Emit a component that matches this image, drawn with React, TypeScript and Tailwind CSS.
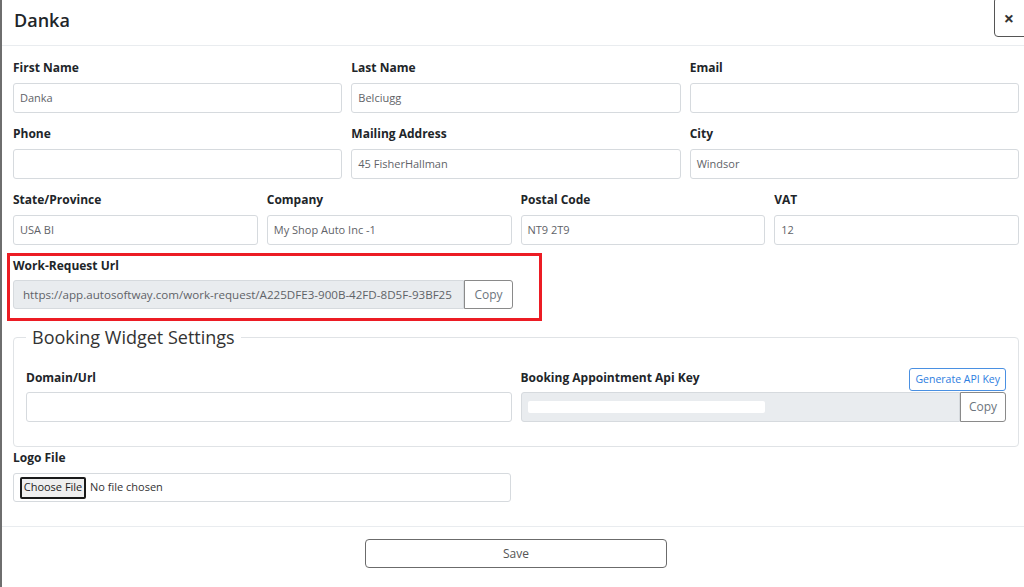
import React from "react";

const font = { fontFamily: '"Open Sans", "Noto Sans", Arial, sans-serif' };

function Field({ label, value, className = "" }: { label: string; value?: string; className?: string }) {
  return (
    <div className={"flex flex-col " + className}>
      <div className="h-[18px] leading-[18px] text-[12px] font-bold text-[#212529] mb-[6px]">{label}</div>
      <div className="h-[30px] border border-[#d6dade] rounded-[3px] bg-white flex items-center pl-[6px] text-[11px] text-[#5f6368] whitespace-nowrap overflow-hidden">
        {value}
      </div>
    </div>
  );
}

export default function App() {
  return (
    <div style={font} className="relative w-[1024px] h-[587px] bg-white border-l-2 border-[#6e6e6e] overflow-hidden">
      {/* Header */}
      <div className="h-[46px] border-b border-[#e9ecef] flex items-center pl-[12px]">
        <div className="text-[18px] font-semibold text-[#212529] leading-none -mt-[6px]">Danka</div>
      </div>
      <div className="absolute right-[-10px] top-[-3px] w-[40px] h-[40px] border-[1.5px] border-[#555] rounded-[4px] bg-white flex items-center justify-center pr-[10px] pt-[2px]">
        <span className="text-[18px] font-bold text-[#333] leading-none">×</span>
      </div>

      {/* Body */}
      <div className="pl-[11px] pr-[5px] pt-[13px]">
        <div className="grid grid-cols-3 gap-x-[9px] gap-y-[12px]">
          <Field label="First Name" value="Danka" />
          <Field label="Last Name" value="Belciugg" />
          <Field label="Email" />
          <Field label="Phone" />
          <Field label="Mailing Address" value="45 FisherHallman" />
          <Field label="City" value="Windsor" />
        </div>
        <div className="grid grid-cols-4 gap-x-[9px] mt-[12px]">
          <Field label="State/Province" value="USA BI" />
          <Field label="Company" value="My Shop  Auto Inc -1" />
          <Field label="Postal Code" value="NT9 2T9" />
          <Field label="VAT" value="12" />
        </div>

        {/* Work request */}
        <div className="mt-[8px] -ml-[6px] w-[535px] border-[3px] border-[#ec1c24] pl-[3px] pr-[26px] pb-[9px] pt-[0px]">
          <div className="h-[21px] leading-[18px] pt-[1px] text-[12px] font-bold text-[#212529] mb-[3px]">Work-Request Url</div>
          <div className="flex h-[29px]">
            <div className="flex-1 min-w-0 bg-[#e9ecef] border border-[#d6dade] rounded-l-[3px] flex items-center pl-[9px] text-[11.6px] text-[#5f6368] whitespace-nowrap overflow-hidden">
              https://app.autosoftway.com/work-request/A225DFE3-900B-42FD-8D5F-93BF25
            </div>
            <div className="w-[49px] shrink-0 border border-[#8a8a8a] rounded-r-[3px] bg-white flex items-center justify-center text-[12px] text-[#6c757d]">
              Copy
            </div>
          </div>
        </div>

        {/* Booking widget */}
        <fieldset className="mt-[5px] border border-[#e0e3e6] rounded-[4px] px-[12px] pb-[24px]">
          <legend className="px-[6px] text-[18px] leading-[22px] text-[#333]">Booking Widget Settings</legend>
          <div className="grid grid-cols-2 gap-x-[9px] pt-[21px]">
            <div className="flex flex-col">
              <div className="h-[23px] leading-[18px] text-[12px] font-bold text-[#212529]">Domain/Url</div>
              <div className="h-[30px] border border-[#d6dade] rounded-[3px] bg-white" />
            </div>
            <div className="flex flex-col">
              <div className="h-[23px] flex justify-between items-start">
                <div className="leading-[18px] text-[12px] font-bold text-[#212529]">Booking Appointment Api Key</div>
                <div className="h-[23px] -mt-[1px] px-[5px] border border-[#4a90e2] rounded-[3px] flex items-center text-[10.5px] text-[#2d7de0]">
                  Generate API Key
                </div>
              </div>
              <div className="flex h-[30px]">
                <div className="flex-1 bg-[#e9ecef] border border-[#d6dade] rounded-l-[3px] flex items-center pl-[6px]">
                  <div className="w-[237px] h-[12px] bg-white rounded-[2px]" />
                </div>
                <div className="w-[46px] border border-[#8a8a8a] rounded-r-[3px] bg-white flex items-center justify-center text-[12px] text-[#6c757d]">
                  Copy
                </div>
              </div>
            </div>
          </div>
        </fieldset>

        {/* Logo file */}
        <div className="mt-[2px] w-[498px] flex flex-col">
          <div className="h-[18px] leading-[18px] text-[12px] font-bold text-[#212529] mb-[6px]">Logo File</div>
          <div className="h-[29px] border border-[#d6dade] rounded-[3px] bg-white flex items-center pl-[6px] gap-[4px]">
            <div className="h-[22px] w-[66px] border-2 border-[#1a1a1a] bg-[#efefef] rounded-[2px] flex items-center justify-center text-[11px] text-[#222]">
              Choose File
            </div>
            <span className="text-[11px] text-[#333]">No file chosen</span>
          </div>
        </div>
      </div>

      {/* Footer */}
      <div className="mt-[24px] border-t border-[#e9ecef] pt-[12px] pl-[11px] pr-[5px] flex justify-center">
        <div className="w-[302px] h-[29px] border border-[#6b6b6b] rounded-[4px] flex items-center justify-center text-[12px] text-[#555]">
          Save
        </div>
      </div>
    </div>
  );
}
